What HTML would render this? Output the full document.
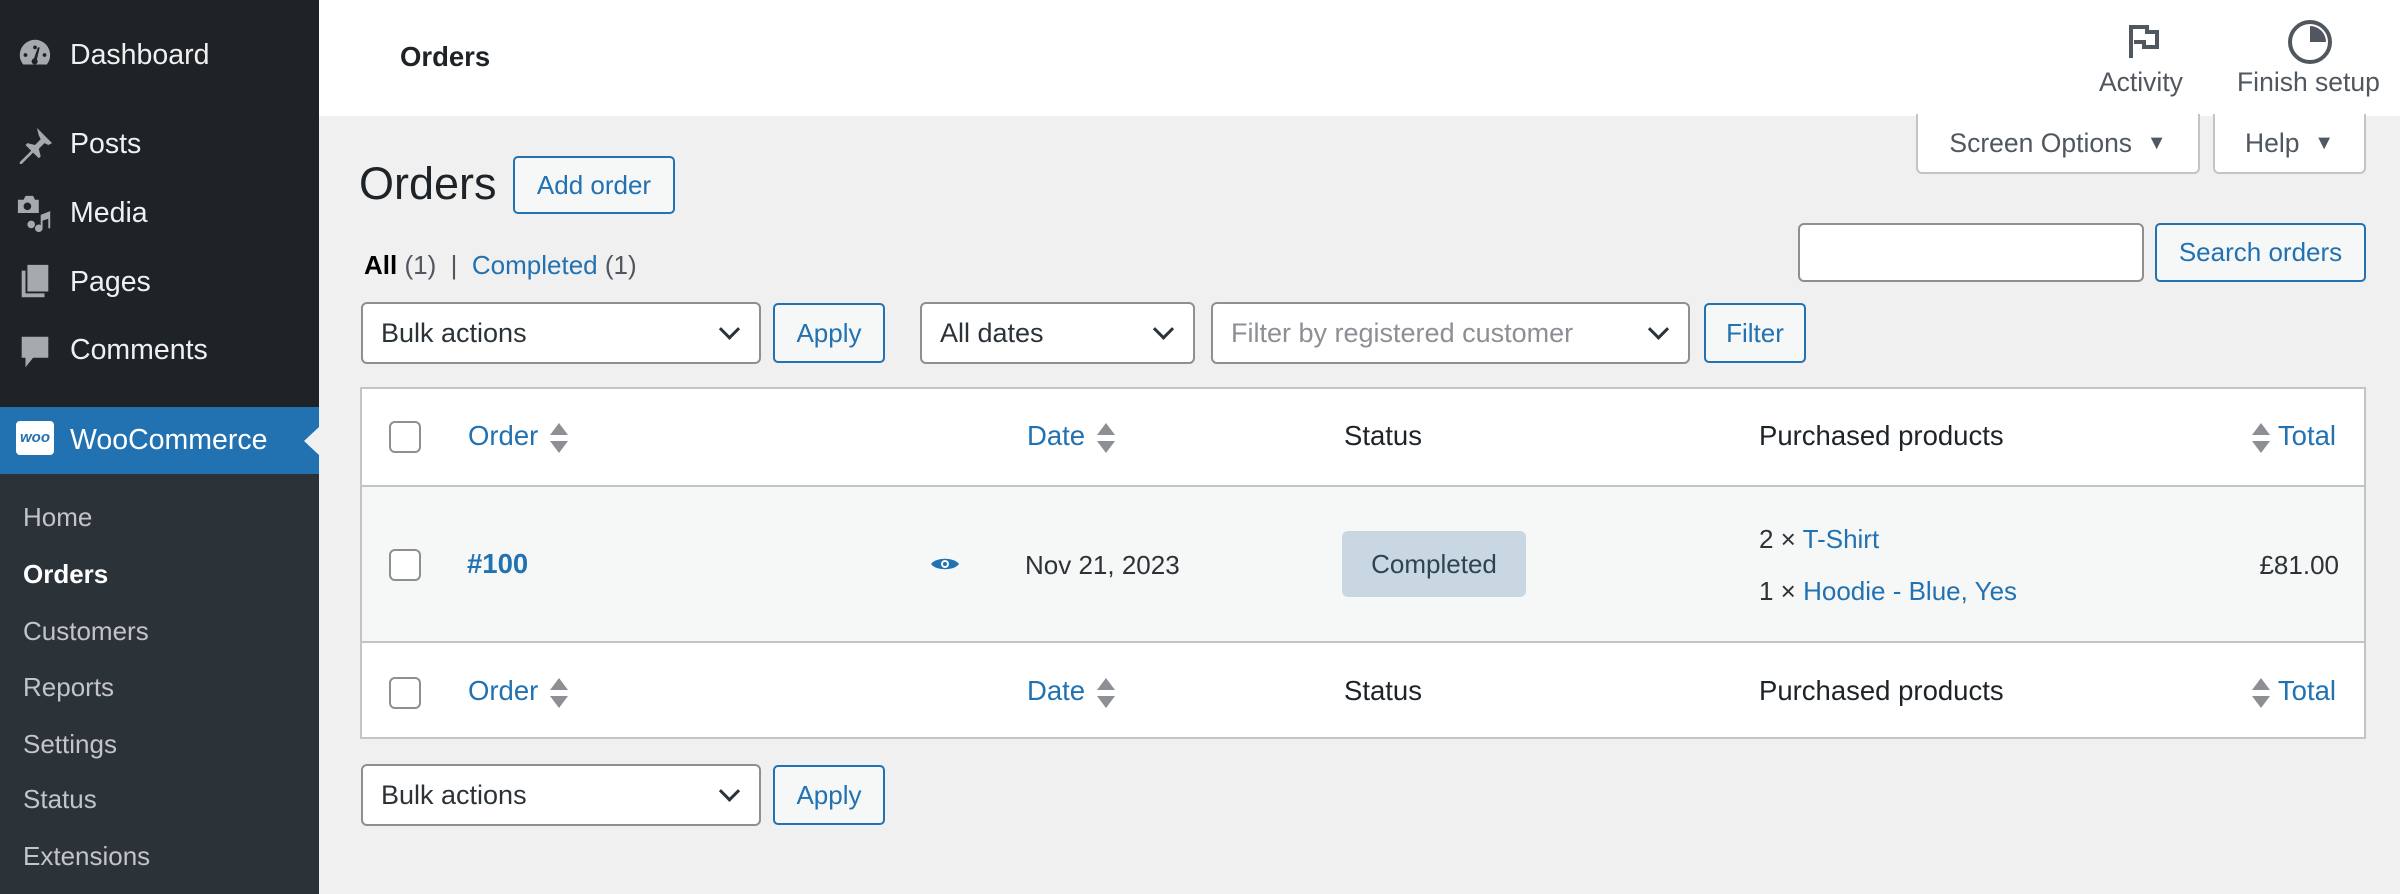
<!DOCTYPE html>
<html><head><meta charset="utf-8"><style>
*{box-sizing:border-box;margin:0;padding:0}
body{width:2400px;height:894px;overflow:hidden;background:#f0f0f1;font-family:"Liberation Sans",sans-serif;color:#1d2327;position:relative;font-size:26px}
.a{position:absolute;white-space:nowrap}
#side{position:absolute;left:0;top:0;width:319px;height:894px;background:#1d2327}
.mi{position:absolute;left:70px;color:#f0f0f1;font-size:28.5px;line-height:34px}
.ic{position:absolute;left:16px;width:38px;height:38px}
.sub{position:absolute;left:23px;color:#c3c4c7;font-size:26px;line-height:30px}
.btn{position:absolute;border:2px solid #2271b1;border-radius:5px;background:#f6f7f7;color:#2271b1;font-size:26px;display:flex;align-items:center;justify-content:center}
.sel{position:absolute;border:2px solid #8c8f94;border-radius:6px;background:#fff;font-size:27px;display:flex;align-items:center;padding-left:18px;color:#2c3338}
.sel:after{content:"";position:absolute;right:22px;top:50%;width:12px;height:12px;border-right:3px solid #2c3338;border-bottom:3px solid #2c3338;transform:translateY(-75%) rotate(45deg)}
.cb{position:absolute;left:389px;width:32px;height:32px;border:2px solid #8c8f94;border-radius:6px;background:#fff}
.lnk{color:#2271b1}
.th{font-size:27.5px}
.sort{display:inline-block;margin-left:12px;vertical-align:middle;width:18px;height:30px;position:relative}
.sort:before{content:"";position:absolute;top:0;left:0;border-left:9px solid transparent;border-right:9px solid transparent;border-bottom:12px solid #8c8f94}
.sort:after{content:"";position:absolute;bottom:0;left:0;border-left:9px solid transparent;border-right:9px solid transparent;border-top:12px solid #8c8f94}
</style></head><body>
<div id="side">
<svg class="ic" style="top:36px" viewBox="0 0 20 20"><path fill="#a7aaad" d="M10 2a8 8 0 0 0-8 8c0 2 .7 3.6 1.8 5h12.4A8 8 0 0 0 10 2zm0 3a1 1 0 1 1 0 2 1 1 0 0 1 0-2zM5 9a1 1 0 1 1 0 2 1 1 0 0 1 0-2zm10 0a1 1 0 1 1 0 2 1 1 0 0 1 0-2zm-2.5-3L11 12.3a1.6 1.6 0 1 1-1.5-.5L11.5 6z"/></svg>
<div class="mi" style="top:38px">Dashboard</div>
<svg class="ic" style="top:126px" viewBox="0 0 20 20"><path fill="#a7aaad" d="M11 1l8 8-2 1-2-1-3 3 1 4-1 1-3-3-6 6H2v-1l6-6-3-3 1-1 4 1 3-3-1-2z"/></svg>
<div class="mi" style="top:127px">Posts</div>
<svg class="ic" style="top:194px" viewBox="0 0 20 20"><path fill="#a7aaad" d="M1 3h3l1-2h4l1 2h2v7H1zm5 1.5a2 2 0 1 0 0 4 2 2 0 0 0 0-4zM13 11l5-2v9h-1v-5l-3 1v4a2 2 0 1 1-1-1.7zM8 14a2 2 0 1 1 0 4 2 2 0 0 1 0-4z"/></svg>
<div class="mi" style="top:196px">Media</div>
<svg class="ic" style="top:263px" viewBox="0 0 20 20"><path fill="#a7aaad" d="M6 1h11v14H6zM3 4h2v12h10v2H3z"/></svg>
<div class="mi" style="top:265px">Pages</div>
<svg class="ic" style="top:333px" viewBox="0 0 20 20"><path fill="#a7aaad" d="M3 2h14v11H9l-4 5v-5H3z"/></svg>
<div class="mi" style="top:333px">Comments</div>
<div style="position:absolute;top:407px;left:0;width:319px;height:67px;background:#2271b1"></div>
<div style="position:absolute;top:427px;left:304px;border-top:14px solid transparent;border-bottom:14px solid transparent;border-right:15px solid #f0f0f1"></div>
<div style="position:absolute;left:16px;top:421px;width:38px;height:34px;background:#fff;border-radius:4px;color:#2271b1;font-size:15px;font-weight:bold;text-align:center;line-height:34px;font-style:italic">woo</div>
<div class="mi" style="top:423px;color:#fff">WooCommerce</div>
<div style="position:absolute;top:474px;left:0;width:319px;height:420px;background:#2c3338"></div>
<div class="sub" style="top:502px">Home</div>
<div class="sub" style="top:559px;color:#fff;font-weight:bold">Orders</div>
<div class="sub" style="top:616px">Customers</div>
<div class="sub" style="top:672px">Reports</div>
<div class="sub" style="top:729px">Settings</div>
<div class="sub" style="top:784px">Status</div>
<div class="sub" style="top:841px">Extensions</div>
</div>
<div style="position:absolute;left:319px;top:0;width:2081px;height:116px;background:#fff"></div>
<div class="a" style="left:400px;top:41px;font-size:27.5px;font-weight:bold">Orders</div>
<svg class="a" style="left:2128px;top:24px" width="32" height="36" viewBox="0 0 32 36"><path d="M3 34V3h16v5h10v15H16v-5H6" fill="none" stroke="#50575e" stroke-width="4"/></svg>
<div class="a" style="left:2099px;top:67px;font-size:26.5px;color:#50575e">Activity</div>
<svg class="a" style="left:2287px;top:19px" width="46" height="46" viewBox="0 0 46 46"><circle cx="23" cy="23" r="20" fill="none" stroke="#50575e" stroke-width="4"/><path d="M23 7a16 16 0 0 1 16 16H23z" fill="#50575e"/></svg>
<div class="a" style="left:2237px;top:67px;font-size:26.5px;color:#50575e">Finish setup</div>
<div style="position:absolute;left:1916px;top:114px;width:284px;height:60px;background:#fff;border:2px solid #c3c4c7;border-top:none;border-radius:0 0 6px 6px;font-size:26.5px;color:#50575e;display:flex;align-items:center;justify-content:center">Screen Options&nbsp;&nbsp;<span style="font-size:20px">▼</span></div>
<div style="position:absolute;left:2213px;top:114px;width:153px;height:60px;background:#fff;border:2px solid #c3c4c7;border-top:none;border-radius:0 0 6px 6px;font-size:26.5px;color:#50575e;display:flex;align-items:center;justify-content:center">Help&nbsp;&nbsp;<span style="font-size:20px">▼</span></div>
<div class="a" style="left:359px;top:158px;font-size:45px">Orders</div>
<div class="btn" style="left:513px;top:156px;width:162px;height:58px">Add order</div>
<div class="a" style="left:364px;top:250px;font-size:26px;color:#50575e"><b style="color:#000">All</b> (1) &nbsp;| &nbsp;<span class="lnk">Completed</span> (1)</div>
<div style="position:absolute;left:1798px;top:223px;width:346px;height:59px;background:#fff;border:2px solid #8c8f94;border-radius:6px"></div>
<div class="btn" style="left:2155px;top:223px;width:211px;height:59px">Search orders</div>
<div class="sel" style="left:361px;top:302px;width:400px;height:62px">Bulk actions</div>
<div class="btn" style="left:773px;top:303px;width:112px;height:60px">Apply</div>
<div class="sel" style="left:920px;top:302px;width:275px;height:62px">All dates</div>
<div class="sel" style="left:1211px;top:302px;width:479px;height:62px;color:#8c8f94">Filter by registered customer</div>
<div class="btn" style="left:1704px;top:303px;width:102px;height:60px">Filter</div>
<div style="position:absolute;left:360px;top:387px;width:2006px;height:352px;background:#fff;border:2px solid #c3c4c7"></div>
<div style="position:absolute;left:362px;top:485px;width:2002px;height:158px;background:#f6f7f7;border-top:2px solid #c3c4c7;border-bottom:2px solid #c3c4c7"></div>
<div class="cb" style="top:421px"></div>
<div class="a lnk th" style="left:468px;top:420px">Order<span class="sort"></span></div>
<div class="a lnk th" style="left:1027px;top:420px">Date<span class="sort"></span></div>
<div class="a th" style="left:1344px;top:420px">Status</div>
<div class="a th" style="left:1759px;top:420px">Purchased products</div>
<div class="a lnk th" style="right:64px;top:420px"><span class="sort" style="margin:0 8px 0 0"></span>Total</div>
<div class="cb" style="top:549px"></div>
<div class="a lnk th" style="left:467px;top:548px;font-weight:bold">#100</div>
<svg class="a" style="left:930px;top:556px" width="30" height="16" viewBox="0 0 30 16"><path d="M1 8C6 1 24 1 29 8 24 15 6 15 1 8z" fill="#2271b1"/><circle cx="15" cy="8" r="4" fill="#f6f7f7"/><circle cx="15" cy="8" r="2" fill="#2271b1"/></svg>
<div class="a" style="left:1025px;top:550px;color:#2c3338">Nov 21, 2023</div>
<div style="position:absolute;left:1342px;top:531px;width:184px;height:66px;background:#c8d7e1;border-radius:6px;color:#2e4453;font-size:26px;display:flex;align-items:center;justify-content:center">Completed</div>
<div class="a" style="left:1759px;top:524px;color:#2c3338">2 × <span class="lnk">T-Shirt</span></div>
<div class="a" style="left:1759px;top:576px;color:#2c3338">1 × <span class="lnk">Hoodie - Blue, Yes</span></div>
<div class="a" style="right:61px;top:550px;color:#2c3338">£81.00</div>
<div class="cb" style="top:677px"></div>
<div class="a lnk th" style="left:468px;top:675px">Order<span class="sort"></span></div>
<div class="a lnk th" style="left:1027px;top:675px">Date<span class="sort"></span></div>
<div class="a th" style="left:1344px;top:675px">Status</div>
<div class="a th" style="left:1759px;top:675px">Purchased products</div>
<div class="a lnk th" style="right:64px;top:675px"><span class="sort" style="margin:0 8px 0 0"></span>Total</div>
<div class="sel" style="left:361px;top:764px;width:400px;height:62px">Bulk actions</div>
<div class="btn" style="left:773px;top:765px;width:112px;height:60px">Apply</div>
</body></html>
